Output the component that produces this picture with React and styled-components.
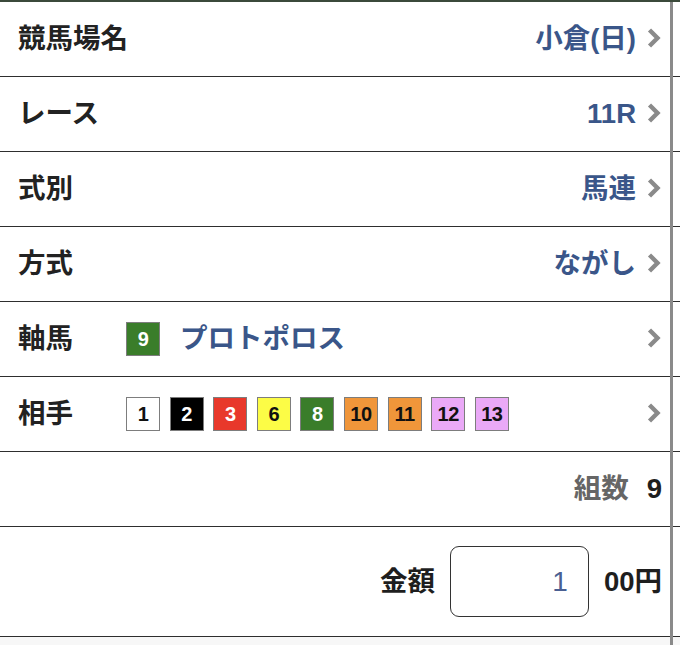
import React from "react";
import styled, { createGlobalStyle } from "styled-components";

const Global = createGlobalStyle`
  html, body { margin: 0; padding: 0; background: #ffffff; }
  body { font-family: "Liberation Sans", "Noto Sans CJK JP", sans-serif; }
  * { box-sizing: border-box; }
`;

const Page = styled.div`
  position: relative;
  width: 680px;
  height: 645px;
  overflow: hidden;
  background: #f7f7f7;
  border-top: 2px solid #3b4a3b;
`;

const ScrollBar = styled.div`
  position: absolute;
  top: 0;
  bottom: 0;
  right: 7px;
  width: 3px;
  background: #8a8a8a;
`;

const List = styled.div`
  display: flex;
  flex-direction: column;
`;

const Row = styled.div`
  display: flex;
  align-items: center;
  height: ${(p) => p.$h || 75}px;
  padding: 0 18px;
  background: #ffffff;
  border-bottom: 1px solid #2e2e2e;
  line-height: 1;
  white-space: nowrap;
`;

const Label = styled.div`
  width: 108px;
  flex: none;
  font-size: 27.5px;
  font-weight: 700;
  color: #222;
  white-space: nowrap;
`;

const Content = styled.div`
  flex: 1;
  display: flex;
  align-items: center;
  justify-content: ${(p) => (p.$end ? "flex-end" : "flex-start")};
  gap: ${(p) => p.$gap || 0}px;
`;

const Value = styled.div`
  font-size: 27.5px;
  font-weight: 700;
  color: #3a5689;
`;

const ChevronBox = styled.svg`
  flex: none;
  width: 26px;
  height: 22px;
  margin-top: -2px;
`;

const Chevron = () => (
  <ChevronBox viewBox="0 0 26 22">
    <polyline
      points="13.5,3 21.5,11 13.5,19"
      fill="none"
      stroke="#8a8a8a"
      strokeWidth="4.4"
      strokeLinejoin="miter"
    />
  </ChevronBox>
);

const BADGE = {
  1: ["#ffffff", "#111"],
  2: ["#000000", "#fff"],
  3: ["#e8382b", "#fff"],
  6: ["#fcfc46", "#111"],
  8: ["#3a7d2a", "#fff"],
  9: ["#3a7d2a", "#fff"],
  10: ["#f0963a", "#111"],
  11: ["#f0963a", "#111"],
  12: ["#eaa9f7", "#111"],
  13: ["#eaa9f7", "#111"],
};

const Badge = styled.div`
  flex: none;
  width: 34px;
  height: 34px;
  display: flex;
  align-items: center;
  justify-content: center;
  background: ${(p) => p.$bg};
  color: ${(p) => p.$fg};
  border: 1.5px solid #7d7d7d;
  font-family: "Liberation Sans", sans-serif;
  font-size: 20px;
  font-weight: 700;
  letter-spacing: -0.5px;
`;

const Badges = styled.div`
  display: flex;
  align-items: center;
  gap: 9.6px;
`;

const HorseName = styled.div`
  font-size: 27.5px;
  font-weight: 700;
  color: #3a5689;
  margin-left: 20px;
`;

const CountLabel = styled.div`
  font-size: 27.5px;
  font-weight: 700;
  color: #666;
`;

const Strong = styled.div`
  font-size: 27.5px;
  font-weight: 700;
  color: #1e1e1e;
`;

const AmountInput = styled.div`
  width: 139px;
  height: 71px;
  border: 1.5px solid #333;
  border-radius: 9px;
  display: flex;
  align-items: center;
  justify-content: flex-end;
  padding-right: 20px;
  font-size: 28px;
  font-weight: 400;
  color: #4a5f92;
  background: #fff;
`;

const NumBadge = ({ n }) => (
  <Badge $bg={BADGE[n][0]} $fg={BADGE[n][1]}>
    {n}
  </Badge>
);

const SelectRow = ({ label, value }) => (
  <Row>
    <Label>{label}</Label>
    <Content $end>
      <Value>{value}</Value>
    </Content>
    <Chevron />
  </Row>
);

export default function App() {
  const partners = [1, 2, 3, 6, 8, 10, 11, 12, 13];
  return (
    <>
      <Global />
      <Page>
        <List>
          <SelectRow label="競馬場名" value="小倉(日)" />
          <SelectRow label="レース" value="11R" />
          <SelectRow label="式別" value="馬連" />
          <SelectRow label="方式" value="ながし" />
          <Row>
            <Label>軸馬</Label>
            <Content>
              <NumBadge n={9} />
              <HorseName>プロトポロス</HorseName>
            </Content>
            <Chevron />
          </Row>
          <Row>
            <Label>相手</Label>
            <Content>
              <Badges>
                {partners.map((n) => (
                  <NumBadge key={n} n={n} />
                ))}
              </Badges>
            </Content>
            <Chevron />
          </Row>
          <Row>
            <Content $end $gap={18}>
              <CountLabel>組数</CountLabel>
              <Strong>9</Strong>
            </Content>
          </Row>
          <Row $h={110}>
            <Content $end $gap={15}>
              <Strong>金額</Strong>
              <AmountInput>1</AmountInput>
              <Strong>00円</Strong>
            </Content>
          </Row>
        </List>
        <ScrollBar />
      </Page>
    </>
  );
}
